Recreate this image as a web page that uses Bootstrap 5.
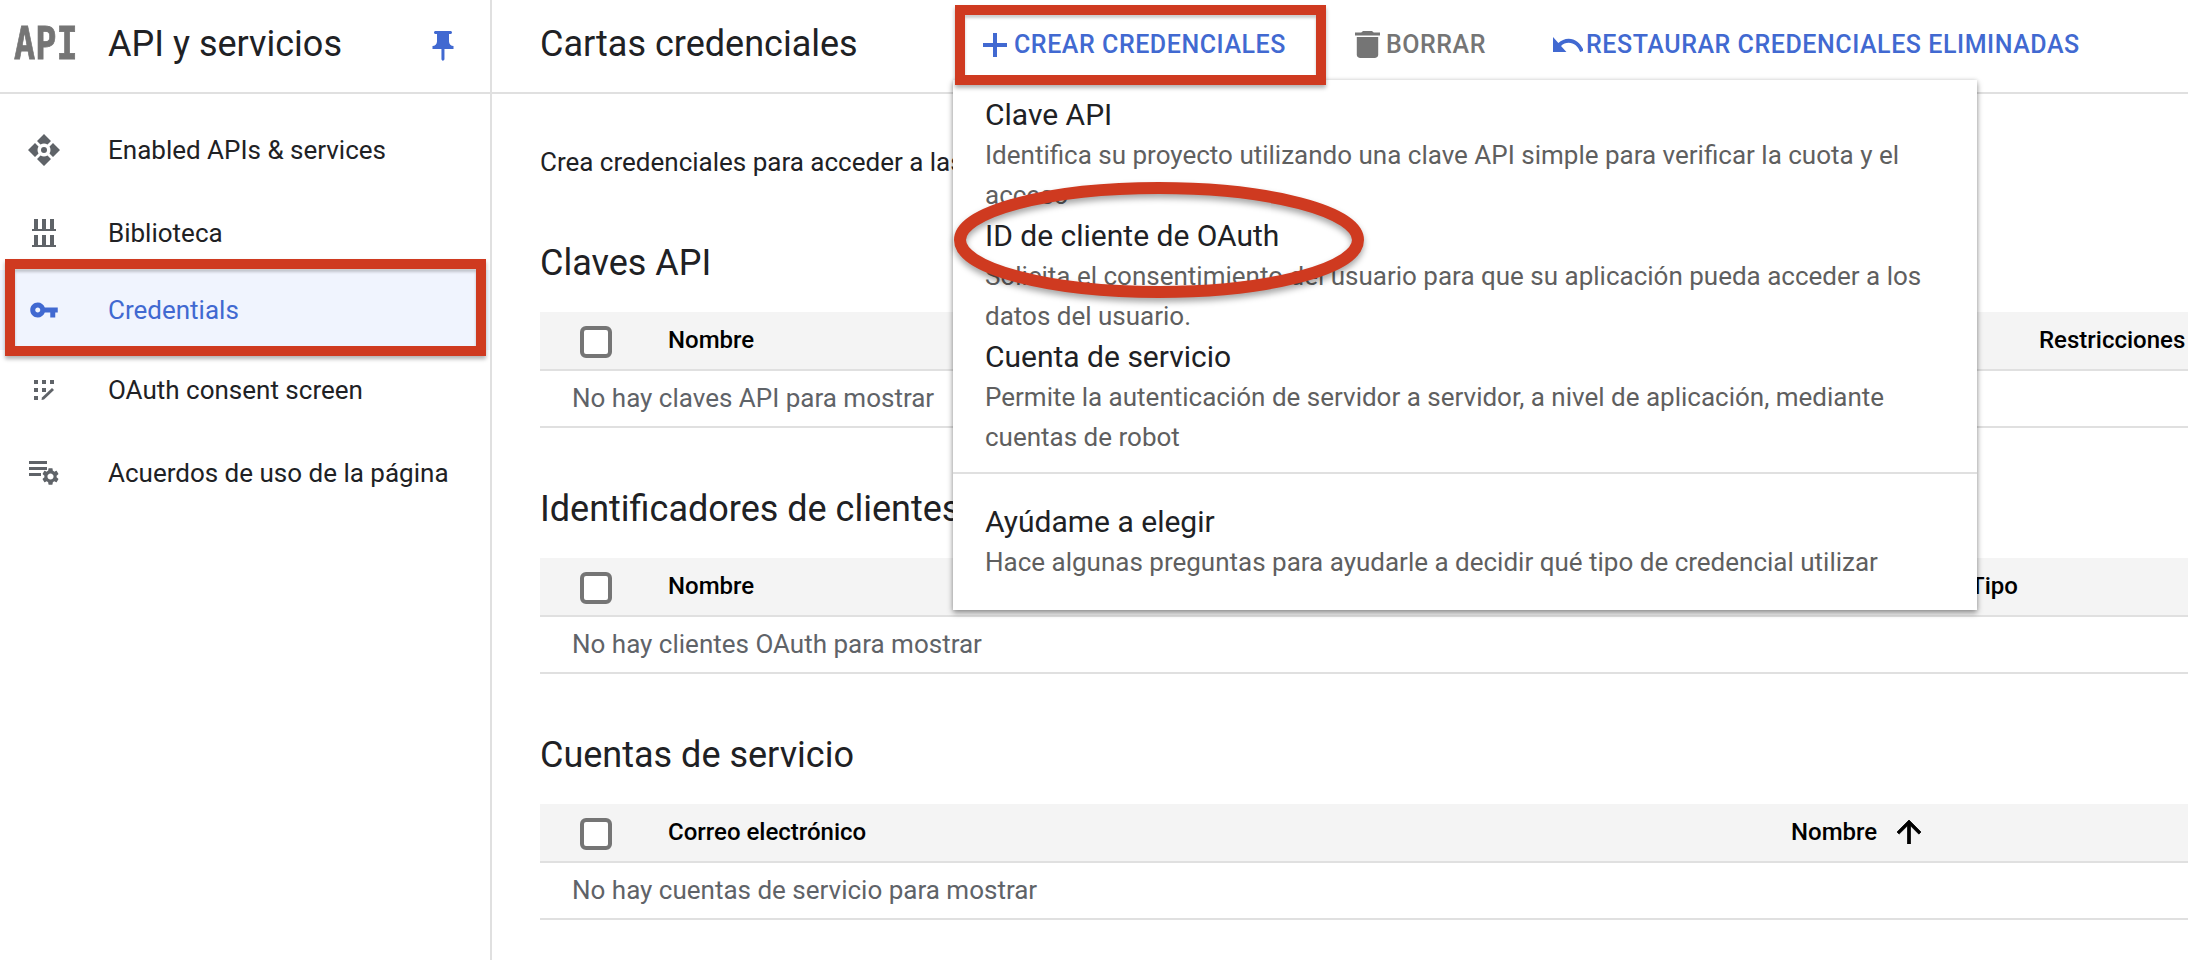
<!DOCTYPE html>
<html lang="es">
<head>
  <meta charset="UTF-8">
  <title>Cartas credenciales</title>
  <link rel="stylesheet" href="https://cdn.jsdelivr.net/npm/bootstrap@5.3.3/dist/css/bootstrap.min.css">
  <script src="https://cdn.jsdelivr.net/npm/bootstrap@5.3.3/dist/js/bootstrap.bundle.min.js"></script>
  <style>
    html, body { height: 100%; overflow: hidden; }
    body { font-family: Roboto, "Liberation Sans", sans-serif; font-size: 26px; color: #202124; background: #fff; }
    .lienzo { width: 2188px; height: 960px; overflow: hidden; }

    /* barra lateral */
    .lateral { width: 492px; flex: none; border-right: 2px solid #e0e0e0; }
    .lateral-cab { height: 94px; border-bottom: 2px solid #e0e0e0; padding: 0 29px 4px 14px; }
    .logo-api { width: 62px; font-family: "DejaVu Sans Mono", monospace; font-weight: 700; font-size: 44px; line-height: 1; color: #757575; -webkit-text-stroke: .8px #757575; transform: scaleX(.8); transform-origin: left center; margin-right: 32px; }
    .lateral-tit { font-size: 36px; color: #202124; }
    .pin-lateral { margin-top: 4px; }
    .fila-menu { height: 80px; color: #202124; text-decoration: none; }
    .fila-menu.baja { padding-top: 6px; height: 80px; }
    .fila-menu.activa { background: #f0f4fe; color: #4169d1; }
    .fila-icono { width: 108px; flex: none; display: flex; justify-content: center; padding-right: 20px; }
    .lista-menu { padding-top: 16px; }

    /* cabecera principal */
    .cab-principal { height: 94px; border-bottom: 2px solid #e0e0e0; padding: 0 0 3px 48px; }
    .tit-principal { font-size: 36px; width: 443px; flex: none; color: #202124; }
    .btn-cab { --bs-btn-padding-x: 0; --bs-btn-padding-y: 0; --bs-btn-border-width: 0; --bs-btn-font-size: 25px; --bs-btn-font-weight: 500; --bs-btn-color: #4169d1; --bs-btn-hover-color: #4169d1; --bs-btn-active-color: #4169d1; display: flex; align-items: center; letter-spacing: .55px; white-space: nowrap; }
    .btn-cab.gris { --bs-btn-color: #757575; --bs-btn-hover-color: #757575; }
    .btn-crear { margin-right: 69px; gap: 7px; }
    .btn-borrar { margin-right: 67px; gap: 6px; }
    .btn-restaurar { gap: 3px; }

    /* contenido */
    .cuerpo { padding: 48px 0 0 48px; }
    .texto-intro { line-height: 40px; margin-bottom: 61px; }
    .tit-seccion { font-size: 36px; font-weight: 400; line-height: 40px; margin-bottom: 29px; color: #202124; }
    .tabla-datos { table-layout: fixed; width: 1648px; margin-bottom: 61px; --bs-table-border-color: #e0e0e0; }
    .tabla-datos th { background: #f4f4f4; height: 58px; padding: 0 0 2px; border-bottom: 2px solid #e0e0e0; font-weight: 500; font-size: 24px; color: #000; vertical-align: middle; white-space: nowrap; }
    .tabla-datos td { height: 57px; padding: 0 0 0 32px; border-bottom: 2px solid #e0e0e0; color: #5f6368; vertical-align: middle; }
    .c-check { width: 128px; }
    .c-resto { width: 149px; }
    .c-tipo { width: 218px; }
    .c-nombre { width: 397px; }
    .casilla { width: 32px; height: 32px; margin: 4px 0 0 40px; border: 4px solid #757575; border-radius: 3px; float: none; display: block; }
    .flecha { margin-left: 20px; }

    /* menu desplegable */
    .menu-crear { left: 461px; top: 80px; width: 1024px; height: 530px; padding: 15px 0 0; border: 0; border-radius: 0; box-shadow: 0 3px 6px rgba(0,0,0,.4), 0 0 4px rgba(0,0,0,.12); z-index: 5; }
    .opcion { padding: 0 40px 0 32px; white-space: normal; line-height: 40px; margin-bottom: 1px; color: #202124; }
    .opcion:hover { background: transparent; }
    .opcion-tit { font-size: 30px; color: #202124; }
    .opcion-desc { font-size: 26px; color: #5f5f5f; }
    .separador { margin: 15px 0 28px; border-top: 2px solid #e0e0e0; opacity: 1; }

    /* marcas rojas */
    .marca { position: absolute; border: 10px solid #cf3a20; box-shadow: 0 3px 4px rgba(0,0,0,.3), inset 0 3px 3px rgba(0,0,0,.2); z-index: 6; pointer-events: none; }
    .marca-lateral { left: 5px; top: 259px; width: 481px; height: 97px; }
    .marca-crear { left: 955px; top: 5px; width: 371px; height: 80px; }
    .marca-elipse { position: absolute; left: 945px; top: 172px; z-index: 6; pointer-events: none; filter: drop-shadow(0 4px 3px rgba(0,0,0,.35)); }
  </style>
</head>
<body>
  <div class="lienzo d-flex position-relative">

    <aside class="lateral">
      <div class="lateral-cab d-flex align-items-center">
        <span class="logo-api">API</span>
        <span class="lateral-tit flex-grow-1">API y servicios</span>
        <svg class="pin-lateral" width="36" height="36" viewBox="0 0 24 24" fill="#4169d1"><path d="M16 9V4h1c.55 0 1-.45 1-1s-.45-1-1-1H7c-.55 0-1 .45-1 1s.45 1 1 1h1v5c0 1.66-1.34 3-3 3v2h5.97v7l1 1 1-1v-7H19v-2c-1.66 0-3-1.34-3-3z"/></svg>
      </div>
      <nav class="lista-menu d-flex flex-column">
        <a class="fila-menu d-flex align-items-center" href="#">
          <span class="fila-icono">
            <svg width="32" height="32" viewBox="-16 -16 32 32" fill="#5f6368">
              <path d="M0-16L7-9 3.5-5.5Q0-7.5-3.5-5.5L-7-9z"/>
              <path d="M0 16L7 9 3.5 5.5Q0 7.5-3.5 5.5L-7 9z"/>
              <path d="M-16 0L-9-7-5.5-3.5Q-7.5 0-5.5 3.5L-9 7z"/>
              <path d="M16 0L9-7 5.5-3.5Q7.5 0 5.5 3.5L9 7z"/>
              <circle r="3"/>
            </svg>
          </span>
          Enabled APIs &amp; services
        </a>
        <a class="fila-menu baja d-flex align-items-center" href="#">
          <span class="fila-icono">
            <svg width="24" height="28" viewBox="0 0 24 28" fill="#5f6368">
              <path d="M2 0h4v10H2zM10 0h4v10h-4zM18 0h4v10h-4zM0 10h24v2H0zM2 16h4v10H2zM10 16h4v10h-4zM18 16h4v10h-4zM0 26h24v2H0z"/>
            </svg>
          </span>
          Biblioteca
        </a>
        <a class="fila-menu activa d-flex align-items-center" href="#">
          <span class="fila-icono">
            <svg width="30" height="30" viewBox="0 0 24 24" fill="#4169d1"><path d="M12.65 10C11.83 7.67 9.61 6 7 6c-3.31 0-6 2.69-6 6s2.69 6 6 6c2.61 0 4.83-1.67 5.65-4H17v4h4v-4h2v-4H12.65zM7 14c-1.1 0-2-.9-2-2s.9-2 2-2 2 .9 2 2-.9 2-2 2z"/></svg>
          </span>
          Credentials
        </a>
        <a class="fila-menu d-flex align-items-center" href="#">
          <span class="fila-icono">
            <svg width="20" height="20" viewBox="0 0 20 20" fill="#5f6368">
              <path d="M0 0h4v4H0zM8 0h4v4H8zM16 0h4v4h-4zM0 8h4v4H0zM8 8h4v4H8zM0 16h4v4H0z"/>
              <path d="M8 17.5L18 8l2 2-10 9.5-2.5.5z"/>
            </svg>
          </span>
          OAuth consent screen
        </a>
        <a class="fila-menu baja d-flex align-items-center" href="#">
          <span class="fila-icono">
            <svg width="30" height="24" viewBox="0 0 30 24" fill="#5f6368">
              <path d="M0 0h18v3H0zM0 6h18v3H0zM0 12h12v3H0z"/>
              <svg x="13" y="7" width="17" height="17" viewBox="2 2 20 20"><path d="M19.14 12.94c.04-.3.06-.61.06-.94 0-.32-.02-.64-.07-.94l2.03-1.58c.18-.14.23-.41.12-.61l-1.92-3.32c-.12-.22-.37-.29-.59-.22l-2.39.96c-.5-.38-1.03-.7-1.62-.94l-.36-2.54c-.04-.24-.24-.41-.48-.41h-3.84c-.24 0-.43.17-.47.41l-.36 2.54c-.59.24-1.13.57-1.62.94l-2.39-.96c-.22-.08-.47 0-.59.22L2.74 8.87c-.12.21-.08.47.12.61l2.03 1.58c-.05.3-.09.63-.09.94s.02.64.07.94l-2.03 1.58c-.18.14-.23.41-.12.61l1.92 3.32c.12.22.37.29.59.22l2.39-.96c.5.38 1.03.7 1.62.94l.36 2.54c.05.24.24.41.48.41h3.84c.24 0 .44-.17.47-.41l.36-2.54c.59-.24 1.13-.56 1.62-.94l2.39.96c.22.08.47 0 .59-.22l1.92-3.32c.12-.22.07-.47-.12-.61l-2.01-1.58zM12 15.6c-1.98 0-3.6-1.62-3.6-3.6s1.62-3.6 3.6-3.6 3.6 1.62 3.6 3.6-1.62 3.6-3.6 3.6z"/></svg>
            </svg>
          </span>
          Acuerdos de uso de la página
        </a>
      </nav>
    </aside>

    <main class="flex-grow-1 position-relative">
      <div class="cab-principal d-flex align-items-center">
        <h1 class="tit-principal fw-normal m-0">Cartas credenciales</h1>
        <button class="btn btn-cab btn-crear" type="button">
          <svg width="24" height="24" viewBox="0 0 24 24" fill="#4169d1"><path d="M10 0h4v10h10v4H14v10h-4V14H0v-4h10z"/></svg>
          CREAR CREDENCIALES
        </button>
        <button class="btn btn-cab gris btn-borrar" type="button">
          <svg width="25" height="27" viewBox="5 3 14 18" preserveAspectRatio="none" fill="#757575"><path d="M6 19c0 1.1.9 2 2 2h8c1.1 0 2-.9 2-2V7H6v12zM19 4h-3.5l-1-1h-5l-1 1H5v2h14V4z"/></svg>
          BORRAR
        </button>
        <button class="btn btn-cab btn-restaurar" type="button">
          <svg width="30" height="15" viewBox="2 7 20.1 9" preserveAspectRatio="none" fill="#4169d1"><path d="M12.5 8c-2.65 0-5.05.99-6.9 2.6L2 7v9h9l-3.62-3.62c1.39-1.16 3.16-1.88 5.12-1.88 3.54 0 6.55 2.31 7.6 5.5l2.37-.78C21.08 11.03 17.15 8 12.5 8z"/></svg>
          RESTAURAR CREDENCIALES ELIMINADAS
        </button>
      </div>

      <div class="dropdown-menu show menu-crear position-absolute">
        <div class="dropdown-item opcion">
          <div class="opcion-tit">Clave API</div>
          <div class="opcion-desc">Identifica su proyecto utilizando una clave API simple para verificar la cuota y el acceso</div>
        </div>
        <div class="dropdown-item opcion">
          <div class="opcion-tit">ID de cliente de OAuth</div>
          <div class="opcion-desc">Solicita el consentimiento del usuario para que su aplicación pueda acceder a los datos del usuario.</div>
        </div>
        <div class="dropdown-item opcion">
          <div class="opcion-tit">Cuenta de servicio</div>
          <div class="opcion-desc">Permite la autenticación de servidor a servidor, a nivel de aplicación, mediante cuentas de robot</div>
        </div>
        <hr class="dropdown-divider separador">
        <div class="dropdown-item opcion">
          <div class="opcion-tit">Ayúdame a elegir</div>
          <div class="opcion-desc">Hace algunas preguntas para ayudarle a decidir qué tipo de credencial utilizar</div>
        </div>
      </div>

      <div class="cuerpo">
        <p class="texto-intro">Crea credenciales para acceder a las API habilitadas.</p>

        <h2 class="tit-seccion">Claves API</h2>
        <table class="table tabla-datos">
          <colgroup><col class="c-check"><col><col class="c-resto"></colgroup>
          <thead>
            <tr><th><input class="form-check-input casilla" type="checkbox" aria-label="Todas"></th><th>Nombre</th><th>Restricciones</th></tr>
          </thead>
          <tbody>
            <tr><td colspan="3">No hay claves API para mostrar</td></tr>
          </tbody>
        </table>

        <h2 class="tit-seccion">Identificadores de clientes OAuth 2.0</h2>
        <table class="table tabla-datos">
          <colgroup><col class="c-check"><col><col class="c-tipo"></colgroup>
          <thead>
            <tr><th><input class="form-check-input casilla" type="checkbox" aria-label="Todas"></th><th>Nombre</th><th>Tipo</th></tr>
          </thead>
          <tbody>
            <tr><td colspan="3">No hay clientes OAuth para mostrar</td></tr>
          </tbody>
        </table>

        <h2 class="tit-seccion">Cuentas de servicio</h2>
        <table class="table tabla-datos">
          <colgroup><col class="c-check"><col><col class="c-nombre"></colgroup>
          <thead>
            <tr>
              <th><input class="form-check-input casilla" type="checkbox" aria-label="Todas"></th>
              <th>Correo electrónico</th>
              <th><span class="d-flex align-items-center">Nombre
                <svg class="flecha" width="24" height="24" viewBox="4 4 16 16" fill="#000" stroke="#000" stroke-width=".5"><path d="M4 12l1.41 1.41L11 7.83V20h2V7.83l5.58 5.59L20 12l-8-8-8 8z"/></svg></span></th>
            </tr>
          </thead>
          <tbody>
            <tr><td colspan="3">No hay cuentas de servicio para mostrar</td></tr>
          </tbody>
        </table>
      </div>
    </main>

    <div class="marca marca-lateral"></div>
    <div class="marca marca-crear"></div>
    <svg class="marca-elipse" width="430" height="140" viewBox="0 0 430 140">
      <ellipse cx="214" cy="68" rx="199" ry="52" fill="none" stroke="#cf3a20" stroke-width="12"/>
    </svg>
  </div>
</body>
</html>
